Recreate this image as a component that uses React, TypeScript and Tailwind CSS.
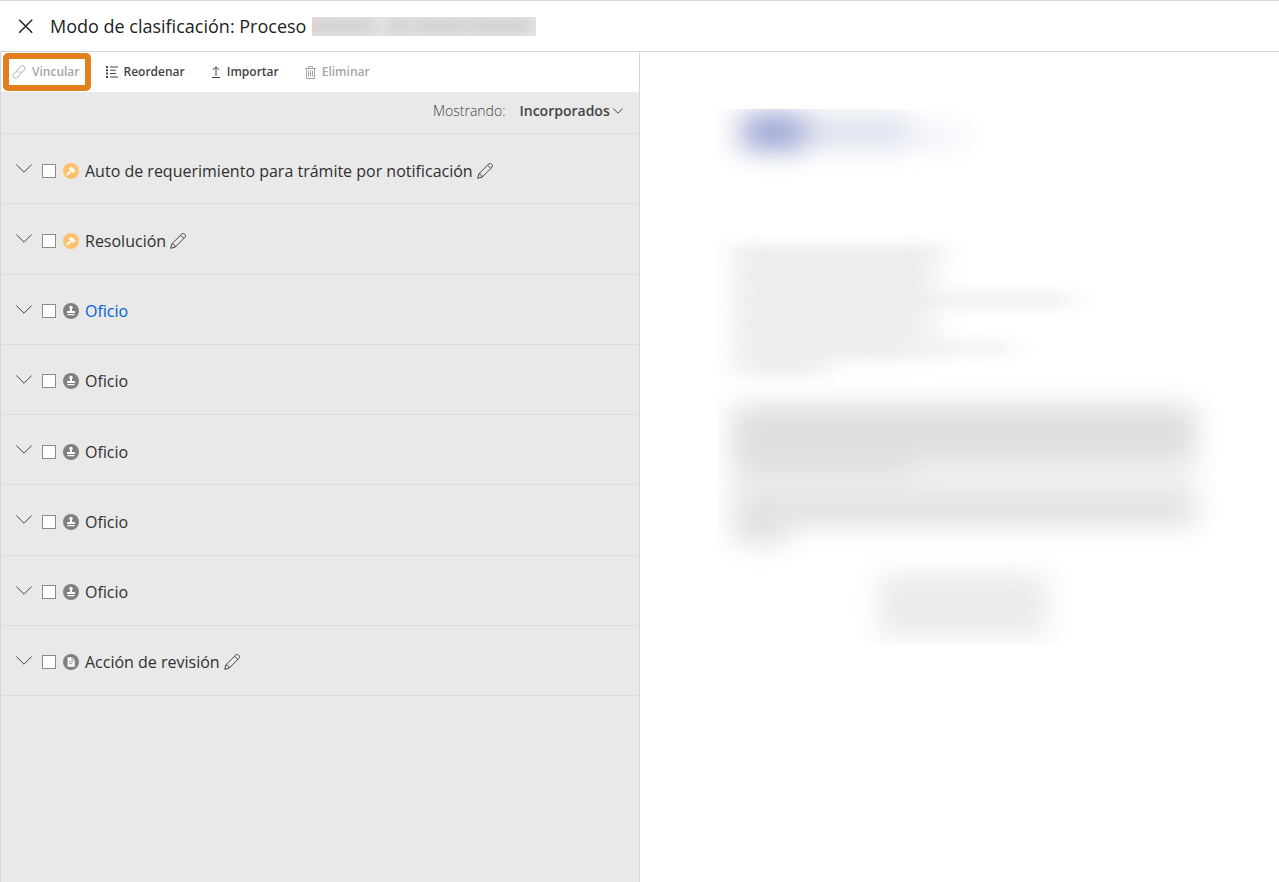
import React from 'react';

type DocKind = 'auto' | 'oficio' | 'accion';

interface DocRow {
  id: number;
  title: string;
  kind: DocKind;
  editable?: boolean;
  active?: boolean;
}

const DOCUMENTS: DocRow[] = [
  { id: 1, title: 'Auto de requerimiento para trámite por notificación', kind: 'auto', editable: true },
  { id: 2, title: 'Resolución', kind: 'auto', editable: true },
  { id: 3, title: 'Oficio', kind: 'oficio', active: true },
  { id: 4, title: 'Oficio', kind: 'oficio' },
  { id: 5, title: 'Oficio', kind: 'oficio' },
  { id: 6, title: 'Oficio', kind: 'oficio' },
  { id: 7, title: 'Oficio', kind: 'oficio' },
  { id: 8, title: 'Acción de revisión', kind: 'accion', editable: true },
];

const FILTER_OPTIONS = ['Incorporados'];

const CloseIcon = () => (
  <svg width="16" height="16" viewBox="0 0 16 16" fill="none" stroke="currentColor" strokeWidth="1.5">
    <path d="M1.200 1.700l13 13M14.200 1.700l-13 13" />
  </svg>
);

const LinkIcon = () => (
  <svg width="14" height="14" viewBox="0 0 14 14" fill="none" stroke="currentColor" strokeWidth="1">
    <path d="M5.600 7.800C4.800 6.600 5 5.300 6 4.300l2.600-2.600c1.100-1.100 2.700-1.100 3.700-.1s1 2.600-.1 3.700L9.800 7.700" />
    <path d="M8.400 6.200c.8 1.200.6 2.500-.4 3.500l-2.600 2.600c-1.100 1.100-2.700 1.100-3.700.1s-1-2.600.1-3.700l2.400-2.400" />
  </svg>
);

const ReorderIcon = () => (
  <svg width="12" height="12" viewBox="0 0 12 12" fill="currentColor">
    <path d="M0 0h2v2H0zM0 3.300h2v2H0zM0 6.600h2v2H0zM0 10h2v2H0z" />
    <path d="M4 .5h8v1H4zM4 3.800h6v1H4zM4 7.100h6v1H4zM4 10.500h8v1H4z" />
  </svg>
);

const ImportIcon = () => (
  <svg width="10" height="12" viewBox="0 0 10 12" fill="none" stroke="currentColor">
    <path d="M5 10V1M1.800 4L5 .8 8.200 4M1 11.500h8" />
  </svg>
);

const TrashIcon = () => (
  <svg width="11" height="13" viewBox="0 0 11 13" fill="none" stroke="currentColor">
    <path d="M0 2.500h11M3.500 2V.5h4V2M1.500 2.500v10h8v-10M3.500 4.500v6M5.500 4.500v6M7.500 4.500v6" />
  </svg>
);

const PencilIcon = () => (
  <svg width="16" height="16" viewBox="0 0 16 16" fill="none" stroke="currentColor" strokeWidth="1">
    <path d="M.7 15.300l1.200-4.500L11.900.9c.7-.6 1.700-.6 2.400 0l.8.8c.6.7.6 1.700 0 2.400L5.200 14.100z" />
    <path d="M1.900 10.800c1.900.2 3.100 1.300 3.300 3.300M10.600 2.200l3.200 3.200" />
  </svg>
);

const ChevronIcon = ({ small }: { small?: boolean }) => (
  <svg
    width={small ? 10 : 16}
    height={small ? 6 : 9}
    viewBox={small ? '0 0 10 6' : '0 0 16 9'}
    fill="none"
    stroke="currentColor"
  >
    <path d={small ? 'M.3.500L5 5.200 9.700.500' : 'M.3.500L8 8.200 15.700.500'} />
  </svg>
);

const KindIcon = ({ kind }: { kind: DocKind }) => (
  <svg width="16" height="16" viewBox="0 0 16 16" className="shrink-0">
    <circle cx="8" cy="8" r="8" fill={kind === 'auto' ? '#ffc069' : '#808080'} />
    {kind === 'auto' && (
      <g fill="#fff">
        <path d="M8.100 3.200l4.600 4.600-1 1-4.600-4.600z" />
        <path d="M7.300 4.600l4 4-1.100 1.700-4.500-4.500z" />
        <path d="M7 7.400l1.500 1.500-3.700 3.700-1.500-1.500z" />
      </g>
    )}
    {kind === 'oficio' && (
      <g fill="#fff">
        <circle cx="8" cy="4.500" r="1.700" />
        <path d="M7.200 5h1.600l.3 3h1.900c.7 0 1 .4 1 1v1H4V9c0-.6.300-1 1-1h1.900z" />
        <path d="M4.500 11h7v1.200h-7z" />
      </g>
    )}
    {kind === 'accion' && (
      <g>
        <path d="M4.600 3.300h4.600l2.500 2.500v6.900H4.600z" fill="#fff" />
        <path d="M9 3.300V6h2.700M6 7.700h4.200M6 9.700h3.400" fill="none" stroke="#808080" strokeWidth=".8" />
      </g>
    )}
  </svg>
);

interface ToolButtonProps {
  icon: React.ReactNode;
  label: string;
  disabled?: boolean;
  highlighted?: boolean;
}

const ToolButton: React.FC<ToolButtonProps> = ({ icon, label, disabled, highlighted }) => (
  <button
    type="button"
    disabled={disabled}
    className="relative flex items-center gap-[6px] text-[12px] font-semibold text-[#444] disabled:text-[#a6a6a6]"
  >
    {icon}
    {label}
    {highlighted && (
      <span className="absolute -inset-y-[10px] -right-[11px] -left-[9px] rounded-[5px] border-6 border-[#e37f1c]" />
    )}
  </button>
);

const DocumentRow: React.FC<{ doc: DocRow }> = ({ doc }) => (
  <li className="flex items-center border-b border-[#dcdcdc] pl-[15px] text-[#444]">
    <button type="button" aria-label="Desplegar" className="mr-[10px]">
      <ChevronIcon />
    </button>
    <div className="flex items-center pt-1">
      <input
        type="checkbox"
        id={`doc-${doc.id}`}
        className="mr-[7px] size-[14px] appearance-none border border-[#8a8a8a] bg-white checked:bg-[#0f6fd6]"
      />
      <KindIcon kind={doc.kind} />
      <label
        htmlFor={`doc-${doc.id}`}
        className={`mr-1 ml-[6px] text-[16px] leading-[22px] font-medium ${doc.active ? 'text-[#0062d0]' : 'text-[#303030]'}`}
      >
        {doc.title}
      </label>
      {doc.editable && (
        <button type="button" aria-label="Editar">
          <PencilIcon />
        </button>
      )}
    </div>
  </li>
);

/* Document preview, kept unreadable on purpose */
const DocumentPreview = () => (
  <svg viewBox="0 0 500 536" className="w-[500px] max-w-full">
    <defs>
      <filter id="soft" filterUnits="userSpaceOnUse" x="-40" y="-40" width="580" height="160" colorInterpolationFilters="sRGB">
        <feGaussianBlur stdDeviation="15 13" />
      </filter>
      <filter id="lines" filterUnits="userSpaceOnUse" x="-50" y="60" width="620" height="560" colorInterpolationFilters="sRGB">
        <feGaussianBlur stdDeviation="14 8" />
      </filter>
      <filter id="block" filterUnits="userSpaceOnUse" x="-50" y="200" width="620" height="420" colorInterpolationFilters="sRGB">
        <feGaussianBlur stdDeviation="14 13" />
      </filter>
    </defs>
    <g filter="url(#soft)">
      <rect x="26" y="4" width="60" height="38" fill="#9ea7d4" />
      <rect x="86" y="6" width="106" height="33" fill="#dde1ee" />
      <rect x="192" y="18" width="56" height="20" fill="#eef1f7" />
    </g>
    <g filter="url(#lines)">
      <path d="M15 136h205v116H15z" fill="#f3f3f3" />
      <path d="M15 139h212v10H15zM15 162h200v10H15zM15 186h200v9H15zM15 210h192v10H15zM15 234h165v9H15zM18 254h95v10H18z" fill="#e6e6e6" />
      <path d="M215 184h142v14H215zM180 233h116v12H180z" fill="#eeeeee" />
    </g>
    <g filter="url(#block)">
      <path d="M15 296h464v54H15z" fill="#dedede" />
      <path d="M15 350h182v18H15z" fill="#e1e1e1" />
      <path d="M197 350h282v34H197zM15 368h182v16H15z" fill="#f1f1f1" />
      <path d="M15 384h464v34H15zM18 418h52v18H18z" fill="#e2e2e2" />
      <path d="M162 464h168v64H162z" fill="#ebebeb" />
    </g>
  </svg>
);

export default function App() {
  return (
    <div className="flex min-h-screen flex-col border-t border-[#d6d6d6] bg-white font-['Open_Sans','Noto_Sans',sans-serif]">
      <header className="flex h-[51px] items-center border-b border-[#d6d6d6] pl-[18px] text-[#222]">
        <button type="button" aria-label="Cerrar" className="mr-4">
          <CloseIcon />
        </button>
        <h1 className="text-[18px] font-medium">Modo de clasificación: Proceso</h1>
        <div className="ml-[6px] h-[19px] w-[224px] overflow-hidden bg-[#e3e3e3]">
          <svg width="224" height="19" viewBox="0 0 224 19">
            <defs>
              <filter id="mask" filterUnits="userSpaceOnUse" x="-20" y="-10" width="264" height="40">
                <feGaussianBlur stdDeviation="6 5" />
              </filter>
            </defs>
            <g filter="url(#mask)">
              <path d="M-8 3H4v14H-8z" fill="#dfc9bb" />
              <path d="M6 3h56v13H6zM76 3h24v13H76zM104 3h52v13h-52zM158 3h60v13h-60z" fill="#d2d2d2" />
            </g>
          </svg>
        </div>
      </header>

      <main className="grid grow grid-cols-2">
        <section className="flex flex-col border-x border-[#d6d6d6] bg-[#e9e9e9]">
          <div className="flex h-10 items-center bg-white pl-[11px]">
            <div className="flex items-center gap-[26px]">
              <ToolButton icon={<LinkIcon />} label="Vincular" disabled highlighted />
              <ToolButton icon={<ReorderIcon />} label="Reordenar" />
              <ToolButton icon={<ImportIcon />} label="Importar" />
              <ToolButton icon={<TrashIcon />} label="Eliminar" disabled />
            </div>
          </div>

          <div className="flex h-[42px] items-center justify-end border-b border-[#dcdcdc] pr-4 pb-1 text-[14px] text-[#444]">
            <label htmlFor="filter" className="mr-[14px] font-light">
              Mostrando:
            </label>
            <div className="relative flex items-center">
              <select id="filter" className="appearance-none bg-transparent pr-3 font-semibold">
                {FILTER_OPTIONS.map((opt) => (
                  <option key={opt}>{opt}</option>
                ))}
              </select>
              <span className="pointer-events-none absolute right-0">
                <ChevronIcon small />
              </span>
            </div>
          </div>

          <ul className="grid min-h-[562px] auto-rows-fr">
            {DOCUMENTS.map((doc) => (
              <DocumentRow key={doc.id} doc={doc} />
            ))}
          </ul>
        </section>

        <section aria-label="Vista previa" className="pt-[57px] pl-[77px]">
          <DocumentPreview />
        </section>
      </main>
    </div>
  );
}
